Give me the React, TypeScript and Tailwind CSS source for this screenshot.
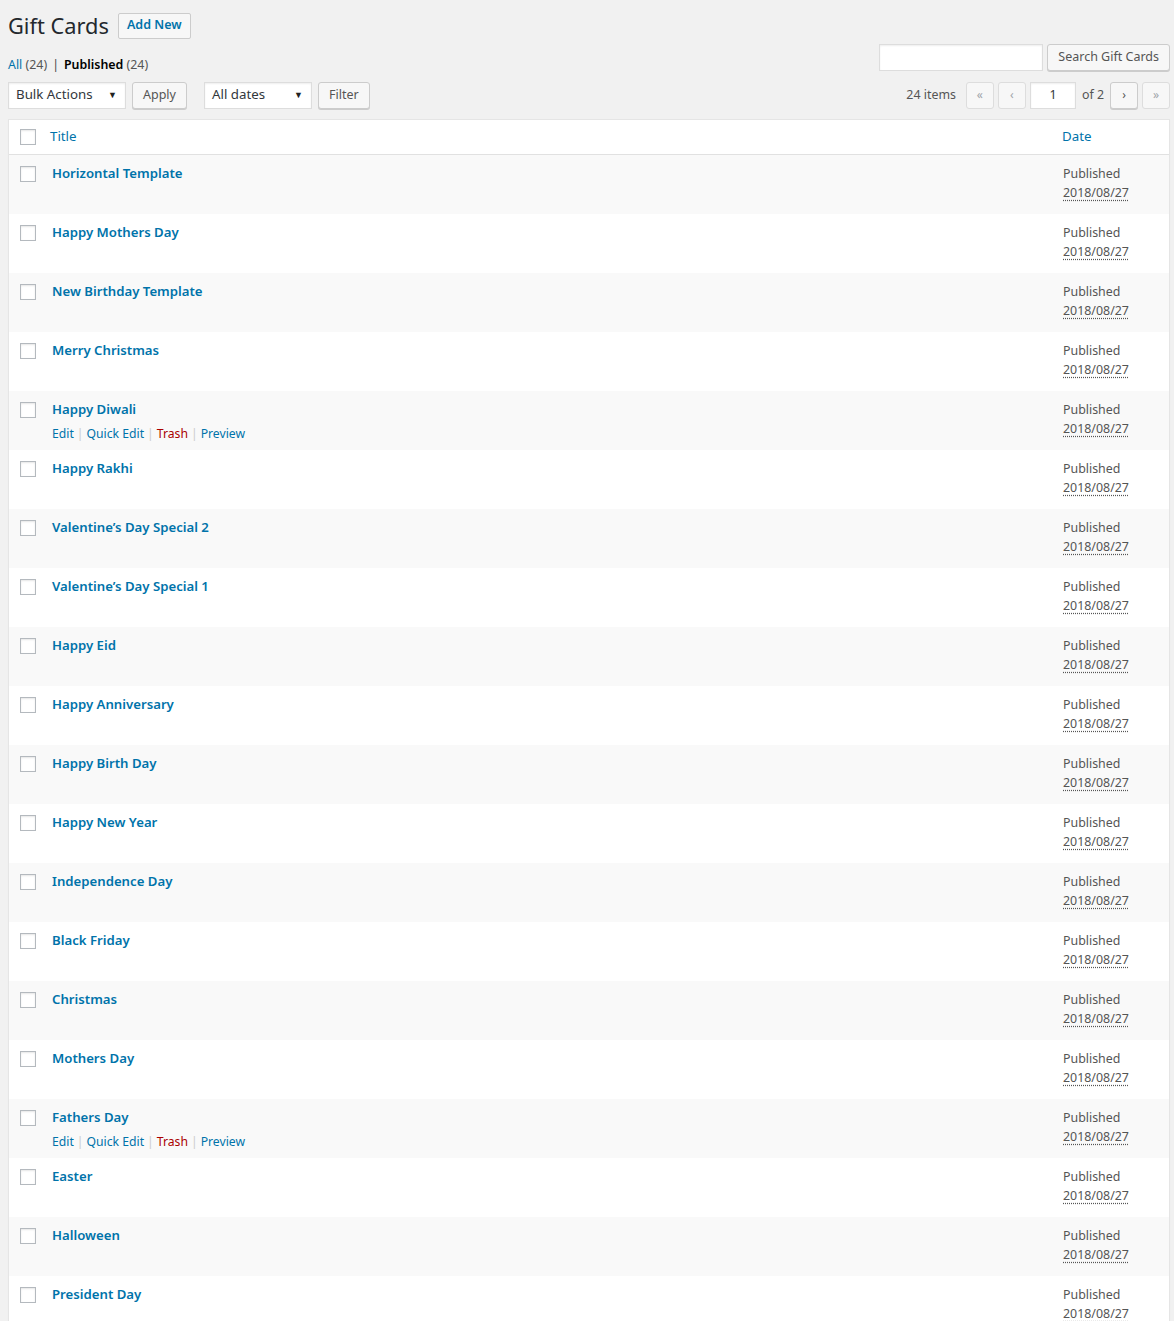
import React from "react";

const titles = [
  "Horizontal Template",
  "Happy Mothers Day",
  "New Birthday Template",
  "Merry Christmas",
  "Happy Diwali",
  "Happy Rakhi",
  "Valentine’s Day Special 2",
  "Valentine’s Day Special 1",
  "Happy Eid",
  "Happy Anniversary",
  "Happy Birth Day",
  "Happy New Year",
  "Independence Day",
  "Black Friday",
  "Christmas",
  "Mothers Day",
  "Fathers Day",
  "Easter",
  "Halloween",
  "President Day",
];

const withActions = ["Happy Diwali", "Fathers Day"];

function Checkbox() {
  return (
    <span className="block h-4 w-4 border border-[#b4b9be] bg-white shadow-[inset_0_1px_2px_rgba(0,0,0,0.1)]" />
  );
}

function Button({ children, className = "" }: { children: React.ReactNode; className?: string }) {
  return (
    <button
      type="button"
      className={`h-[27px] rounded-[3px] border border-[#ccc] bg-[#f7f7f7] px-[10px] text-[12.5px] leading-none text-[#555] shadow-[0_1px_0_#ccc] ${className}`}
    >
      {children}
    </button>
  );
}

function Select({ label, width }: { label: string; width: string }) {
  return (
    <div
      className={`flex h-[27px] items-center justify-between border border-[#ddd] bg-white pl-[7px] pr-[8px] text-[13.3px] text-[#32373c] shadow-[inset_0_1px_2px_rgba(0,0,0,0.07)] ${width}`}
    >
      <span>{label}</span>
      <span className="text-[9px] text-[#222]">▼</span>
    </div>
  );
}

function NavButton({ children, enabled = false }: { children: React.ReactNode; enabled?: boolean }) {
  return (
    <span
      className={`flex h-[27px] w-[28px] items-center justify-center rounded-[3px] border text-[12px] ${
        enabled
          ? "border-[#ccc] bg-[#f7f7f7] text-[#555] shadow-[0_1px_0_#ccc]"
          : "border-[#ddd] bg-[#f7f7f7] text-[#a0a5aa]"
      }`}
    >
      {children}
    </span>
  );
}

function Sep() {
  return <span className="mx-[3px] text-[#ccc]">|</span>;
}

export default function App() {
  return (
    <div
      className="min-h-[1321px] bg-[#f1f1f1] pl-2 pr-1 text-[12.4px] text-[#444]"
      style={{ fontFamily: '"Noto Sans", "Open Sans", Arial, sans-serif' }}
    >
      {/* Heading */}
      <div className="flex items-center gap-[9px] pt-[12px]">
        <h1 className="text-[21.8px] font-normal leading-[27px] text-[#23282d]">Gift Cards</h1>
        <span className="flex h-[26px] items-center rounded-[2px] border border-[#ccc] bg-[#f7f7f7] px-[8px] text-[12.5px] font-semibold text-[#0073aa]">
          Add New
        </span>
      </div>

      {/* Views + search */}
      <div className="flex items-start justify-between">
        <div className="pt-[17px] text-[12.4px] text-[#666]">
          <span className="text-[#0073aa]">All</span> <span className="text-[#555]">(24)</span>
          <span className="mx-[5px] text-[#444]">|</span>
          <span className="font-semibold text-[#000]">Published</span> <span className="text-[#555]">(24)</span>
        </div>
        <div className="flex gap-[4px] pt-[5px]">
          <div className="h-[27px] w-[164px] border border-[#ddd] bg-white shadow-[inset_0_1px_2px_rgba(0,0,0,0.07)]" />
          <Button>Search Gift Cards</Button>
        </div>
      </div>

      {/* Tablenav */}
      <div className="mt-[7px] flex items-center justify-between">
        <div className="flex items-center">
          <Select label="Bulk Actions" width="w-[118px]" />
          <Button className="ml-[6px]">Apply</Button>
          <Select label="All dates" width="ml-[17px] w-[108px]" />
          <Button className="ml-[6px]">Filter</Button>
        </div>
        <div className="flex items-center text-[12.4px] text-[#555]">
          <span className="mr-[10px]">24 items</span>
          <div className="flex items-center gap-[4px]">
            <NavButton>«</NavButton>
            <NavButton>‹</NavButton>
            <span className="flex h-[27px] w-[46px] items-center justify-center border border-[#ddd] bg-white text-[#32373c] shadow-[inset_0_1px_2px_rgba(0,0,0,0.07)]">
              1
            </span>
            <span className="mx-[2px]">of 2</span>
            <NavButton enabled>›</NavButton>
            <NavButton>»</NavButton>
          </div>
        </div>
      </div>

      {/* Table */}
      <div className="mt-[10px] border border-[#e5e5e5] bg-white shadow-[0_1px_1px_rgba(0,0,0,0.04)]">
        <div className="flex h-[35px] items-center border-b border-[#e1e1e1]">
          <div className="w-[41px] pl-[11px]">
            <Checkbox />
          </div>
          <div className="flex-1 text-[13.3px] text-[#0073aa]">Title</div>
          <div className="w-[107px] text-[13.3px] text-[#0073aa]">Date</div>
        </div>
        {titles.map((t, i) => (
          <div
            key={t}
            className={`flex h-[59px] items-start ${i % 2 === 0 ? "bg-[#f9f9f9]" : "bg-white"}`}
          >
            <div className="w-[43px] pl-[11px] pt-[11px]">
              <Checkbox />
            </div>
            <div className="flex-1 pt-[9px]">
              <div className="text-[13.2px] font-semibold leading-[19px] text-[#0073aa]">{t}</div>
              {withActions.includes(t) && (
                <div className="mt-[6px] text-[12.2px] leading-[17px]">
                  <span className="text-[#0073aa]">Edit</span>
                  <Sep />
                  <span className="text-[#0073aa]">Quick Edit</span>
                  <Sep />
                  <span className="text-[#a00]">Trash</span>
                  <Sep />
                  <span className="text-[#0073aa]">Preview</span>
                </div>
              )}
            </div>
            <div className="w-[106px] pt-[9px] text-[12.4px] leading-[19px] text-[#555]">
              <div>Published</div>
              <div className="underline decoration-dotted decoration-[#555] underline-offset-[3px]">2018/08/27</div>
            </div>
          </div>
        ))}
      </div>
    </div>
  );
}
